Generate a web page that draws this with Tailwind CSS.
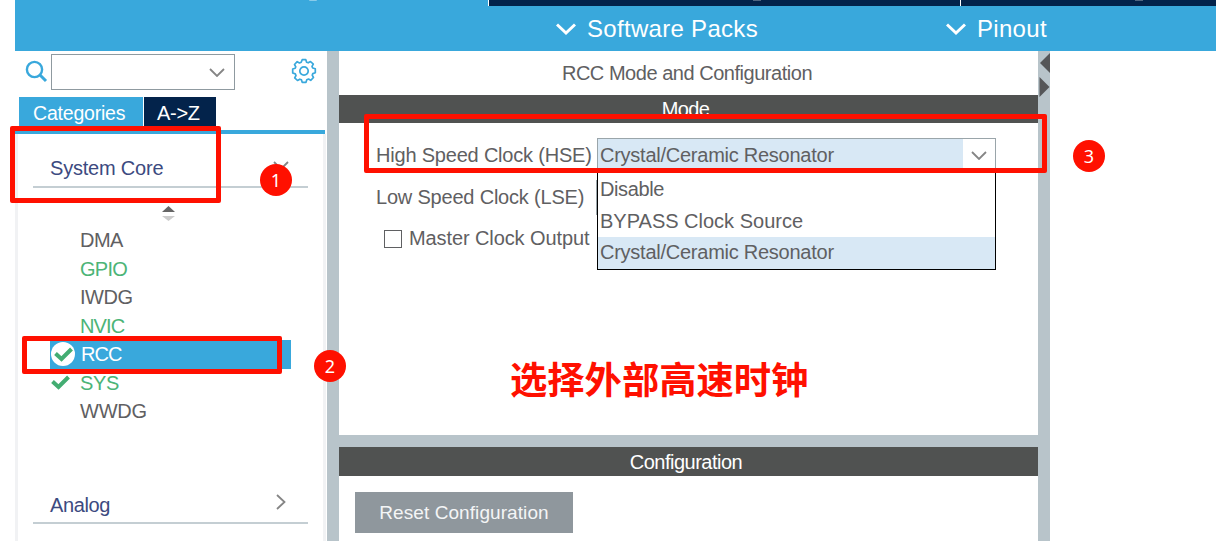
<!DOCTYPE html>
<html lang="en">
<head>
  <meta charset="UTF-8" />
  <meta name="viewport" content="width=device-width, initial-scale=1.0" />
  <title>RCC Mode and Configuration</title>
  <script src="https://cdn.jsdelivr.net/npm/@tailwindcss/browser@4"></script>
</head>
<body class="relative w-[1216px] h-[541px] overflow-hidden bg-white flex flex-col font-['Liberation_Sans',Arial,sans-serif] text-[20px] leading-none text-[#5f6062] whitespace-nowrap">

  <!-- Top bar -->
  <header class="ml-[15px] h-[51px] shrink-0 bg-[#39a8dc] flex flex-col">
    <div class="h-[6px] shrink-0 flex">
      <div class="w-[473px] flex justify-end pr-[171px]"><span class="w-2 h-px rounded-b bg-white/40"></span></div>
      <div class="w-[472px] bg-[#03234b] border-l border-white flex justify-end pr-[199px]"><span class="w-2 h-px bg-white/30"></span></div>
      <div class="flex-1 bg-[#03234b] border-l border-white flex justify-end pr-[73px]"><span class="w-2 h-px bg-white/30"></span></div>
    </div>
    <nav class="flex-1 flex items-center text-[24px] tracking-[0.3px] text-white">
      <div class="w-[390px] ml-[541px] flex items-center gap-[11px]">
        <svg class="w-5 h-[14px]" viewBox="0 0 20 14" fill="none" stroke="currentColor" stroke-width="3"><path d="M1 2.5l9 8.5 9-8.5" /></svg>
        <span>Software Packs</span>
      </div>
      <div class="flex items-center gap-[11px]">
        <svg class="w-5 h-[14px]" viewBox="0 0 20 14" fill="none" stroke="currentColor" stroke-width="3"><path d="M1 2.5l9 8.5 9-8.5" /></svg>
        <span>Pinout</span>
      </div>
    </nav>
  </header>

  <main class="flex-1 min-h-0 ml-[15px] flex">

    <!-- Categories panel -->
    <aside class="w-[312px] shrink-0 flex flex-col">
      <div class="h-[46px] flex items-start pt-[3px] pl-[10px]">
        <svg class="w-[24px] h-[24px] mt-[5px]" viewBox="0 0 24 24" fill="none" stroke="#39a8dc" stroke-width="2.4"><circle cx="9.500" cy="10.500" r="7.600" /><path d="M15 16l6 6" stroke-width="3" /></svg>
        <div class="ml-[2px] w-[184px] h-[36px] border border-[#8f9aa0] flex items-center justify-end pr-[9px]">
          <svg class="w-4 h-[9px]" viewBox="0 0 16 9" fill="none" stroke="#858585" stroke-width="1.8"><path d="M1 1l7 7 7-7" /></svg>
        </div>
        <!-- Gear: toothed outline around a hub -->
        <svg class="ml-[56px] mt-[4px] w-[26px] h-[26px]" viewBox="-13 -13 26 26" fill="none" stroke="#39a8dc" stroke-width="1.700" stroke-linejoin="round">
          <circle r="4.200" />
          <path d="M-1.800-11.300H1.800L2.600-8.800 4.200-8.200 6.500-9.500 9.300-6.900 8-4.600 8.700-3 11.300-2.200V1.800L8.800 2.600 8.200 4.200 9.500 6.500 6.700 9.300 4.500 8 2.800 8.700 2 11.300H-1.800L-2.600 8.800-4.200 8.200-6.500 9.500-9.300 6.800-8 4.500-8.700 2.900-11.300 2V-2L-8.800-2.700-8.200-4.200-9.500-6.500-6.800-9.300-4.500-8-2.800-8.700Z" />
        </svg>
      </div>
      <div class="h-[33px] shrink-0 pl-[4px] flex text-white">
        <div class="w-[124px] h-[30px] pt-[7px] bg-[#39a8dc] pl-[14px] text-[19.500px] tracking-[-0.2px]">Categories</div>
        <div class="w-[73px] h-[30px] pt-[6px] bg-[#03234b] border-l border-white pl-[13px] tracking-[-0.3px]">A-&gt;Z</div>
      </div>
      <div class="h-[4px] shrink-0 w-[310px] bg-[#39a8dc]"></div>

      <div class="flex-1 w-[311px] border-x-[3px] border-[#f1f2f4] pl-[15px] flex flex-col">
        <div class="w-[275px] h-[54px] shrink-0 border-b-2 border-[#c4ced3] pl-[17px] pr-[19px] flex justify-between text-[#3c4a80]">
          <span class="pt-[24px] tracking-[-0.2px]">System Core</span>
          <svg class="mt-[27px] w-4 h-[9px]" viewBox="0 0 16 9" fill="none" stroke="#858585" stroke-width="1.800"><path d="M1 1l7 7 7-7" /></svg>
        </div>
        <svg class="mt-[17px] ml-[129px] w-[13px] h-[17px] shrink-0" viewBox="0 0 12 17" preserveAspectRatio="none"><path d="M0 7l6-6 6 6z" fill="#666" /><path d="M0 11h12l-6 5z" fill="#ccc" /></svg>

        <ul class="mt-[4px] w-[258px] pl-[17px] flex flex-col tracking-[-0.5px]">
          <li class="h-[28.500px] pl-[30px] flex items-center">DMA</li>
          <li class="h-[28.500px] pl-[30px] flex items-center text-[#4cb477] tracking-[-0.7px]">GPIO</li>
          <li class="h-[28.500px] pl-[30px] flex items-center">IWDG</li>
          <li class="h-[28.500px] pl-[30px] flex items-center text-[#4cb477] tracking-[-0.9px]">NVIC</li>
          <li class="h-[28.500px] pl-px flex items-center gap-[6px] bg-[#39a8dc] text-white tracking-[-1px]">
            <span class="w-6 h-6 rounded-full bg-white flex items-center justify-center">
              <svg class="w-[19px] h-[15px]" viewBox="0 0 19 15" fill="none" stroke="#43ad72" stroke-width="4"><path d="M1.500 6.500l6 5.500 10-10" /></svg>
            </span>
            RCC
          </li>
          <li class="h-[28.500px] pl-px flex items-center gap-[10px] text-[#4cb477] tracking-[-0.3px]">
            <svg class="w-[19px] h-[15px]" viewBox="0 0 19 15" fill="none" stroke="#43ad72" stroke-width="4"><path d="M1.500 6.500l6 5.500 10-10" /></svg>
            SYS
          </li>
          <li class="h-[28.500px] pl-[30px] flex items-center tracking-[-0.2px]">WWDG</li>
        </ul>

        <div class="mt-[66px] w-[275px] h-[32px] shrink-0 border-b-2 border-[#c4ced3] pl-[17px] pr-[22px] flex justify-between text-[#3c4a80]">
          <span class="pt-[3px] tracking-[-0.4px]">Analog</span>
          <svg class="mt-[2px] w-[10px] h-4" viewBox="0 0 10 16" fill="none" stroke="#858585" stroke-width="1.800"><path d="M1 1l7.500 7-7.500 7" /></svg>
        </div>
      </div>
    </aside>

    <div class="w-[12px] shrink-0 bg-[#b8c4ca]"></div>

    <!-- Mode and configuration -->
    <section class="w-[699px] shrink-0 flex flex-col">
      <h1 class="h-[44px] shrink-0 pr-[3px] flex items-center justify-center tracking-[-0.47px]">RCC Mode and Configuration</h1>
      <h2 class="h-[28px] shrink-0 bg-[#505251] text-white pr-[6px] flex items-center justify-center tracking-[-0.6px]">Mode</h2>

      <div class="h-[312px] shrink-0 pt-[15px] pl-[37px]">
        <div class="relative flex items-center h-[35px]">
          <span class="w-[221px] pb-[2px] tracking-[-0.2px]">High Speed Clock (HSE)</span>
          <div class="w-[399px] h-[36px] border border-[#9aa5aa] bg-[#d8e8f5] flex justify-between">
            <span class="pl-[2px] pt-[6px] tracking-[-0.25px]">Crystal/Ceramic Resonator</span>
            <span class="w-[32px] bg-white flex items-center justify-center">
              <svg class="w-4 h-[9px]" viewBox="0 0 16 9" fill="none" stroke="#858585" stroke-width="1.800"><path d="M1 1l7 7 7-7" /></svg>
            </span>
          </div>
          <!-- Open list of the HSE select -->
          <ul class="absolute left-[221px] top-[34px] w-[399px] h-[98px] z-10 border border-black bg-white">
            <li class="h-[32px] pl-[2px] flex items-center tracking-[-0.4px]">Disable</li>
            <li class="h-[32px] pl-[2px] flex items-center">BYPASS Clock Source</li>
            <li class="h-[32px] pl-[2px] pb-[2px] flex items-center bg-[#d8e8f5] tracking-[-0.25px]">Crystal/Ceramic Resonator</li>
          </ul>
        </div>
        <div class="mt-[7px] flex items-center h-[35px]">
          <span class="w-[220px] pb-[2px] tracking-[-0.2px]">Low Speed Clock (LSE)</span>
          <div class="w-[400px] h-[35px] border border-[#9aa5aa]"></div>
        </div>
        <div class="mt-[6px] ml-[8px] flex items-center h-[35px] gap-[7px]">
          <span class="w-[18px] h-[18px] border-[1.500px] border-[#5f6062]"></span>
          <span class="pb-[2px] tracking-[-0.1px]">Master Clock Output</span>
        </div>
      </div>

      <div class="h-[12px] shrink-0 bg-[#b8c4ca]"></div>
      <h2 class="h-[29px] shrink-0 bg-[#505251] text-white pr-[5px] flex items-center justify-center tracking-[-0.5px]">Configuration</h2>
      <div class="pt-[16px] pl-[16px]">
        <button class="w-[218px] h-[41px] bg-[#8f979d] text-[#f4f5f6] text-[19px] tracking-[0.08px]">Reset Configuration</button>
      </div>
    </section>

    <div class="w-[12px] shrink-0 bg-[#b8c4ca]">
      <svg class="w-[12px] h-[48px]" viewBox="0 0 12 48" fill="#555658"><path d="M12 2v20L2 12z" /><path d="M1.500 26v20l10-10z" /></svg>
    </div>
  </main>

  <!-- Step annotations -->
  <div class="absolute z-20 left-[10px] top-[126px] w-[211px] h-[77px] border-[5px] border-[#ff1000] rounded-[2px]"></div>
  <div class="absolute z-20 left-[22px] top-[336px] w-[260px] h-[38px] border-[5px] border-[#ff1000] rounded-[2px]"></div>
  <div class="absolute z-20 left-[364px] top-[114px] w-[683px] h-[59px] border-[5px] border-[#ff1000] rounded-[2px]"></div>
  <div class="absolute z-20 left-[260px] top-[164px] w-8 h-8 rounded-full bg-[#ff1000] text-white font-['Noto_Sans',sans-serif] text-[18px] flex items-center justify-center">1</div>
  <div class="absolute z-20 left-[314px] top-[350px] w-8 h-8 rounded-full bg-[#ff1000] text-white font-['Noto_Sans',sans-serif] text-[18px] flex items-center justify-center">2</div>
  <div class="absolute z-20 left-[1073px] top-[140px] w-8 h-8 rounded-full bg-[#ff1000] text-white font-['Noto_Sans',sans-serif] text-[18px] flex items-center justify-center">3</div>
  <p lang="zh-CN" class="absolute z-20 left-[510px] top-[360px] font-['Noto_Sans_CJK_SC',sans-serif] font-bold text-[37.300px] text-[#ff1000]">选择外部高速时钟</p>
</body>
</html>
